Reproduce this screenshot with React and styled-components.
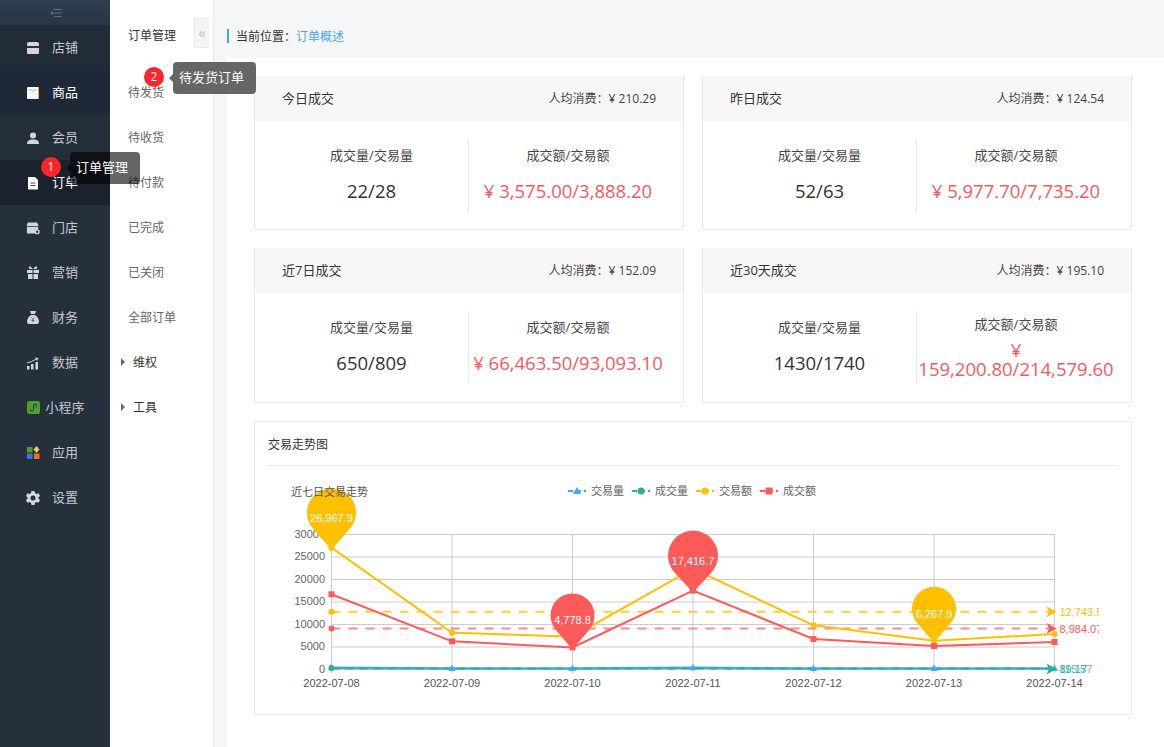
import styled, { createGlobalStyle } from 'styled-components';

const GlobalStyle = createGlobalStyle`
  html, body {
    margin: 0;
    padding: 0;
    background: #fff;
  }
  body {
    font-family: "Open Sans", "Noto Sans CJK SC", sans-serif;
    font-size: 12px;
    color: #333;
  }
  * {
    box-sizing: border-box;
  }
`;

const ICON_GREY = '#d3d6da';

const ShopIcon = () => (
  <svg width="14" height="14" viewBox="0 0 14 14">
    <path d="M1 3q0-2 2-2h8q2 0 2 2v2H1z" fill={ICON_GREY} />
    <path d="M1 7h12v5q0 1-1 1H2q-1 0-1-1z" fill={ICON_GREY} />
    <path d="M1 5h12v2H1z" fill="#3a2f35" />
  </svg>
);
const BagIcon = () => (
  <svg width="14" height="14" viewBox="0 0 14 14">
    <rect x="1" y="1" width="12" height="12" rx="1" fill="#fff" />
    <path d="M13 1v12h-1V1z" fill="#f0a63c" />
    <path d="M4 3q3 4 6 0" fill="none" stroke="#a9b3bf" strokeWidth="1" />
  </svg>
);
const UserIcon = () => (
  <svg width="14" height="14" viewBox="0 0 14 14">
    <circle cx="7" cy="4.5" r="3" fill={ICON_GREY} />
    <path d="M1 13q0-4 4-4.500h4q4 .5 4 4.500z" fill={ICON_GREY} />
  </svg>
);
const FileIcon = () => (
  <svg width="14" height="14" viewBox="0 0 14 14">
    <path d="M2 1h7l3 3v9q0 .5-.5.500h-9q-.5 0-.5-.5z" fill="#fff" />
    <path d="M4.500 7h5M4.500 9.500h5" stroke="#3f4a5a" strokeWidth="1" />
  </svg>
);
const StoreIcon = () => (
  <svg width="15" height="14" viewBox="0 0 15 14">
    <path d="M2 1h10l1.500 4h-13z" fill={ICON_GREY} />
    <path d="M1 6h12v3h-3v4H2q-1 0-1-1z" fill={ICON_GREY} />
    <circle cx="12" cy="11" r="2" fill="none" stroke={ICON_GREY} strokeWidth="1.500" />
  </svg>
);
const GiftIcon = () => (
  <svg width="14" height="15" viewBox="0 0 14 15">
    <path d="M4 1l3 3 3-3 1.500 2L10 4H4L2.500 3z" fill={ICON_GREY} />
    <path d="M1 5h5.500v3H1zM7.500 5H13v3H7.500zM2 9h4.500v5H2zM7.500 9H12v5H7.500z" fill={ICON_GREY} />
  </svg>
);
const MoneyIcon = () => (
  <svg width="14" height="15" viewBox="0 0 14 15">
    <path d="M4 1h6L9 4H5z" fill={ICON_GREY} />
    <path d="M5 5h4q4 3 4 7 0 2-2 2H3q-2 0-2-2 0-4 4-7z" fill={ICON_GREY} />
    <path d="M5.500 7.500L7 9.500l1.500-2M7 9.500V12M5.500 10.500h3" stroke="#4b5560" strokeWidth=".8" fill="none" />
  </svg>
);
const BarsIcon = () => (
  <svg width="14" height="14" viewBox="0 0 14 14">
    <path d="M1 10h2.500v3.500H1zM5 8h2.500v5.500H5zM9.500 6H12v7.500H9.500z" fill={ICON_GREY} />
    <path d="M1 7q5-1 9-4" fill="none" stroke={ICON_GREY} strokeWidth="1" />
    <path d="M9 1.500l3.500.5-1.500 3z" fill={ICON_GREY} />
  </svg>
);
const MiniIcon = () => (
  <svg width="13" height="13" viewBox="0 0 13 13">
    <rect width="13" height="13" rx="2.500" fill="#4f9e2f" />
    <path d="M3.500 8.500q0 1.500 1.500 1.500t1.500-1.500v-4Q6.500 3 8 3t1.500 1.500T8 6" fill="none" stroke="#1e3a1a" strokeWidth="1" />
  </svg>
);
const AppsIcon = () => (
  <svg width="14" height="14" viewBox="0 0 14 14">
    <rect x="1" y="1" width="5.500" height="5.500" fill="#4f9e2f" />
    <path d="M10.500 0l3 3.500-3 3.500-3-3.500z" fill="#f6c945" />
    <rect x="1" y="7.500" width="5.500" height="5.500" fill="#3f74e0" />
    <rect x="8" y="7.500" width="5.500" height="5.500" fill="#ee7414" />
  </svg>
);
const GearIcon = () => (
  <svg width="14" height="14" viewBox="0 0 14 14">
    <path d="M5.500 0h3l.4 2 1.800 1 1.900-.7 1.400 2.700-1.500 1.200v1.600l1.500 1.200-1.400 2.700-1.900-.7-1.800 1-.4 2h-3l-.4-2-1.800-1-1.900.7L0 9l1.500-1.200V6.200L0 5l1.400-2.700 1.900.7 1.800-1z" fill={ICON_GREY} />
    <circle cx="7" cy="7" r="2.500" fill="#25303d" />
  </svg>
);

const NAV_ITEMS = [
  { label: '店铺', Icon: ShopIcon, bg: '#212c39' },
  { label: '商品', Icon: BagIcon, bg: '#1e2937', active: true },
  { label: '会员', Icon: UserIcon, bg: '#232e3b' },
  { label: '订单', Icon: FileIcon, bg: '#1b212d', active: true },
  { label: '门店', Icon: StoreIcon },
  { label: '营销', Icon: GiftIcon },
  { label: '财务', Icon: MoneyIcon },
  { label: '数据', Icon: BarsIcon },
  { label: '小程序', Icon: MiniIcon },
  { label: '应用', Icon: AppsIcon },
  { label: '设置', Icon: GearIcon },
];

const SUB_ITEMS = ['待发货', '待收货', '待付款', '已完成', '已关闭', '全部订单'];

const STATS = [
  { title: '今日成交', avg: '¥ 210.29', count: '22/28', amount: '¥ 3,575.00/3,888.20' },
  { title: '昨日成交', avg: '¥ 124.54', count: '52/63', amount: '¥ 5,977.70/7,735.20' },
  { title: '近7日成交', avg: '¥ 152.09', count: '650/809', amount: '¥ 66,463.50/93,093.10' },
  { title: '近30天成交', avg: '¥ 195.10', count: '1430/1740', amount: '¥ 159,200.80/214,579.60', wrapped: true },
];

// chart is positioned in its own svg coords, origin at 268,476 of the page
const X0 = 63.5;
const STEP_X = 120.5;
const Y0 = 193;
const toY = (v) => Y0 - (v / 30000) * 135;
const toX = (i) => X0 + i * STEP_X;

const DATES = ['2022-07-08', '2022-07-09', '2022-07-10', '2022-07-11', '2022-07-12', '2022-07-13', '2022-07-14'];
const YELLOW = '#ffc000';
const RED = '#ff5a5a';
const BLUE = '#3fa9f5';
const GREEN = '#2fb08c';
const AMOUNT = [26967.9, 8067, 7178, 22300, 9700, 6267.9, 7777];
const DONE = [16600, 6150, 4778.8, 17416.7, 6670, 5100, 6000];
const VOLUME = [260, 120, 90, 300, 110, 100, 90];
const AVG_AMOUNT = 12743.5;
const AVG_DONE = 8984.07;

const pts = (vals) => vals.map((v, i) => `${toX(i)},${toY(v)}`).join(' ');

const pinPath = (cx, tip, r, cy) => {
  const d = tip - cy;
  const a = Math.acos(r / d);
  const dx = r * Math.sin(a);
  const dy = r * Math.cos(a);
  return `M${cx} ${tip}L${cx - dx} ${cy + dy}A${r} ${r} 0 1 1 ${cx + dx} ${cy + dy}Z`;
};

const PINS = [
  { i: 0, v: 26967.9, r: 24.5, label: '26,967.9', color: YELLOW, rise: 37 },
  { i: 2, v: 4778.8, r: 22, label: '4,778.8', color: RED, rise: 34 },
  { i: 3, v: 17416.7, r: 25, label: '17,416.7', color: RED, rise: 37 },
  { i: 5, v: 6267.9, r: 22, label: '6,267.9', color: YELLOW, rise: 34 },
];

const LEGEND = [
  { x: 300, label: '交易量', color: BLUE, mark: 'tri' },
  { x: 364, label: '成交量', color: GREEN, mark: 'dot' },
  { x: 428, label: '交易额', color: YELLOW, mark: 'dot' },
  { x: 492, label: '成交额', color: RED, mark: 'square' },
];

const TrendChart = () => (
  <ChartSvg width="831" height="226" viewBox="0 0 831 226">
    <g stroke="#ccc" strokeWidth="1" fill="none">
      {[0, 1, 2, 3, 4, 5, 6].map((i) => (
        <line key={i} x1={toX(i)} x2={toX(i)} y1={58.5} y2={Y0 + 4} />
      ))}
      {[0, 5000, 10000, 15000, 20000, 25000, 30000].map((v) => (
        <line key={v} x1={X0} x2={toX(6)} y1={toY(v) + 0.5} y2={toY(v) + 0.5} />
      ))}
    </g>
    {[0, 5000, 10000, 15000, 20000, 25000, 30000].map((v) => (
      <ChartText key={v} x="57" y={toY(v) + 3.5} textAnchor="end" fill="#666">{v}</ChartText>
    ))}
    {DATES.map((d, i) => (
      <ChartText key={d} x={toX(i)} y="211" textAnchor="middle" fill="#555">{d}</ChartText>
    ))}

    {LEGEND.map(({ x, label, color, mark }) => (
      <g key={label}>
        <line x1={x} x2={x + 18} y1="15" y2="15" stroke={color} strokeWidth="2" strokeDasharray="5 3" />
        {mark === 'tri' && <path d={`M${x + 9} 11l4 7h-8z`} fill={color} />}
        {mark === 'dot' && <circle cx={x + 9} cy="15" r="3.500" fill={color} />}
        {mark === 'square' && <rect x={x + 5.500} y="11.500" width="7" height="7" fill={color} />}
        <ChartText x={x + 23} y="19" fill="#666">{label}</ChartText>
      </g>
    ))}

    <line x1={X0} x2={toX(6)} y1={toY(AVG_AMOUNT)} y2={toY(AVG_AMOUNT)} stroke="#ffce3d" strokeWidth="2" strokeDasharray="9 8" />
    <line x1={X0} x2={toX(6)} y1={toY(AVG_DONE)} y2={toY(AVG_DONE)} stroke="#ff8a8a" strokeWidth="2" strokeDasharray="9 8" />
    <circle cx={X0} cy={toY(AVG_AMOUNT)} r="3" fill={YELLOW} />
    <circle cx={X0} cy={toY(AVG_DONE)} r="3" fill={RED} />
    <path d={`M${toX(6) + 2} ${toY(AVG_AMOUNT)}l-10-5.500 2.500 5.500-2.500 5.500z`} fill={YELLOW} />
    <path d={`M${toX(6) + 2} ${toY(AVG_DONE)}l-10-5.500 2.500 5.500-2.500 5.500z`} fill={RED} />
    <ChartText x={toX(6) + 5} y={toY(AVG_AMOUNT) + 4} fill={YELLOW}>12,743.5</ChartText>
    <ChartText x={toX(6) + 5} y={toY(AVG_DONE) + 4} fill={RED}>8,984.07</ChartText>

    <polyline points={pts(AMOUNT)} fill="none" stroke={YELLOW} strokeWidth="2" />
    <polyline points={pts(DONE)} fill="none" stroke={RED} strokeWidth="2" />
    {AMOUNT.map((v, i) => <circle key={i} cx={toX(i)} cy={toY(v)} r="3" fill={YELLOW} />)}
    {DONE.map((v, i) => <rect key={i} x={toX(i) - 3} y={toY(v) - 3} width="6" height="6" fill={RED} />)}

    <polyline points={pts(VOLUME)} fill="none" stroke={BLUE} strokeWidth="2.500" />
    <line x1={X0} x2={toX(6)} y1={Y0 - 0.5} y2={Y0 - 0.5} stroke={GREEN} strokeWidth="2" strokeDasharray="8 6" />
    {VOLUME.map((v, i) => <path key={i} d={`M${toX(i)} ${toY(v) - 4}l3.500 6.500h-7z`} fill={BLUE} />)}
    <circle cx={X0} cy={Y0 - 1} r="3" fill={GREEN} />
    <path d={`M${toX(6) + 2} ${Y0}l-10-5.500 2.500 5.500-2.500 5.500z`} fill={GREEN} />
    <ChartText x={toX(6) + 5} y={Y0 + 4} fill="#5bb9f0">115.57</ChartText>
    <ChartText x={toX(6) + 5} y={Y0 + 4} fill={GREEN}>89.17</ChartText>

    {PINS.map(({ i, v, r, label, color, rise }) => {
      const cx = toX(i);
      const tip = toY(v) + 2;
      const cy = tip - rise;
      return (
        <g key={label}>
          <path d={pinPath(cx, tip, r, cy)} fill={color} />
          <ChartText x={cx} y={cy + 9} textAnchor="middle" fill="#fff">{label}</ChartText>
        </g>
      );
    })}
    <ChartText x="23" y="20" fill="#555">近七日交易走势</ChartText>
  </ChartSvg>
);

const App = () => {
  return (
    <>
      <GlobalStyle />
      <Page>
        <Sidebar>
          <SidebarToggle>
            <svg width="12" height="8" viewBox="0 0 12 8">
              <path d="M4 .5h8M4 4h8M4 7.500h8" stroke="#5f6e7e" strokeWidth="1" />
              <path d="M0 4l3-2v4z" fill="#5f6e7e" />
            </svg>
          </SidebarToggle>
          {NAV_ITEMS.map(({ label, Icon, bg, active }) => (
            <NavItem key={label} $bg={bg} $active={active}>
              <NavIcon><Icon /></NavIcon>
              <NavLabel>{label}</NavLabel>
            </NavItem>
          ))}
        </Sidebar>

        <SubNav>
          <SubTitle>订单管理</SubTitle>
          {SUB_ITEMS.map((item) => <SubItem key={item}>{item}</SubItem>)}
          <SubGroup>维权</SubGroup>
          <SubGroup>工具</SubGroup>
          <CollapseTab>«</CollapseTab>
        </SubNav>

        <Main>
          <Breadcrumb>
            <Crumb>当前位置：<CrumbLink>订单概述</CrumbLink></Crumb>
          </Breadcrumb>
          <Content>
            <StatGrid>
              {STATS.map((s) => (
                <StatCard key={s.title}>
                  <StatHeader>
                    <StatTitle>{s.title}</StatTitle>
                    <StatAvg>人均消费：{s.avg}</StatAvg>
                  </StatHeader>
                  <StatBody>
                    <StatCol>
                      <StatLabel>成交量/交易量</StatLabel>
                      <StatValue>{s.count}</StatValue>
                    </StatCol>
                    <StatCol $divided $wrapped={s.wrapped}>
                      <StatLabel>成交额/交易额</StatLabel>
                      <StatValue $red $wrapped={s.wrapped}>{s.amount}</StatValue>
                    </StatCol>
                  </StatBody>
                </StatCard>
              ))}
            </StatGrid>
            <ChartCard>
              <ChartTitle>交易走势图</ChartTitle>
              <TrendChart />
            </ChartCard>
          </Content>
        </Main>

        <Tip $x={70} $y={152} $w={70} $h={32} $bg="rgba(0,0,0,.6)">订单管理</Tip>
        <Badge $x={41} $y={157}>1</Badge>
        <Tip $x={173} $y={62} $w={83} $h={32} $bg="#666">待发货订单</Tip>
        <Badge $x={144} $y={67}>2</Badge>
      </Page>
    </>
  );
};

const Page = styled.div`
  position: relative;
  display: flex;
  width: 1164px;
  height: 747px;
  overflow: hidden;
`;

const Sidebar = styled.aside`
  width: 110px;
  flex-shrink: 0;
  background: #25303d;
`;

const SidebarToggle = styled.div`
  height: 25px;
  display: flex;
  align-items: center;
  justify-content: center;
  padding-left: 2px;
  background: linear-gradient(#2e3f50, #283645);
`;

const NavItem = styled.div`
  height: 45px;
  display: flex;
  align-items: center;
  padding-left: 26px;
  background: ${(p) => p.$bg || 'transparent'};
  color: ${(p) => (p.$active ? '#fff' : '#c4c9ce')};
`;

const NavIcon = styled.span`
  width: 14px;
  display: flex;
  justify-content: center;
`;

const NavLabel = styled.span`
  width: 50px;
  padding-bottom: 2px;
  text-align: center;
  font-size: 13px;
`;

const SubNav = styled.nav`
  position: relative;
  width: 104px;
  flex-shrink: 0;
  background: #fff;
  border-right: 1px solid #e9ebee;
  padding-top: 13px;
`;

const SubTitle = styled.div`
  height: 57px;
  line-height: 45px;
  padding-left: 18px;
  color: #333;
`;

const SubItem = styled.div`
  height: 45px;
  line-height: 45px;
  padding-left: 18px;
  color: #666;
`;

const SubGroup = styled.div`
  position: relative;
  height: 45px;
  line-height: 45px;
  padding-left: 23px;
  color: #333;
  &::before {
    content: '';
    position: absolute;
    left: 11px;
    top: 18px;
    border-style: solid;
    border-width: 4px 0 4px 4px;
    border-color: transparent transparent transparent #5f6b7a;
  }
`;

const CollapseTab = styled.div`
  position: absolute;
  left: 84px;
  top: 18px;
  width: 15px;
  height: 30px;
  background: #f3f5f7;
  border: 1px solid #e9ecef;
  border-right: 0;
  color: #b3c3d2;
  font-size: 15px;
  line-height: 27px;
  text-align: center;
`;

const Main = styled.main`
  flex: 1;
  min-width: 0;
  background: #f5f6f8;
  padding-left: 13px;
`;

const Breadcrumb = styled.div`
  height: 58px;
  padding-top: 29px;
`;

const Crumb = styled.div`
  height: 14px;
  line-height: 15px;
  border-left: 2px solid #3fa9f5;
  padding-left: 7px;
  color: #333;
`;

const CrumbLink = styled.span`
  color: #4aa6ee;
`;

const Content = styled.div`
  height: 689px;
  background: #fff;
  padding: 18px 32px 0 27px;
`;

const StatGrid = styled.div`
  display: grid;
  grid-template-columns: 430px 430px;
  gap: 18px;
`;

const StatCard = styled.section`
  border: 1px solid #eaeaea;
  border-top: 0;
`;

const StatHeader = styled.header`
  height: 45px;
  padding: 0 27px 2px;
  display: flex;
  align-items: center;
  justify-content: space-between;
  background: #f7f7f7;
`;

const StatTitle = styled.span`
  font-size: 13px;
  color: #333;
`;

const StatAvg = styled.span`
  color: #444;
`;

const StatBody = styled.div`
  display: grid;
  grid-template-columns: 193px 199px;
  padding: 18px 0 18px 20px;
`;

const StatCol = styled.div`
  min-height: 72px;
  display: flex;
  flex-direction: column;
  justify-content: flex-start;
  text-align: center;
  padding-top: ${(p) => (p.$wrapped ? '3px' : '6px')};
  padding-bottom: ${(p) => (p.$wrapped ? '6px' : '0')};
  border-left: ${(p) => (p.$divided ? '1px solid #eaeaea' : '0')};
`;

const StatLabel = styled.div`
  font-size: 13px;
  line-height: 20px;
  color: #444;
`;

const StatValue = styled.div`
  margin-top: ${(p) => (p.$wrapped ? '6px' : '16px')};
  font-size: 18.500px;
  line-height: ${(p) => (p.$wrapped ? '19px' : '20px')};
  color: ${(p) => (p.$red ? '#f55a5f' : '#333')};
`;

const ChartCard = styled.section`
  margin-top: 18px;
  height: 294px;
  border: 1px solid #eaeaea;
  padding: 0 13px;
`;

const ChartTitle = styled.div`
  height: 44px;
  line-height: 46px;
  color: #333;
  border-bottom: 1px solid #eaeaea;
`;

const ChartSvg = styled.svg`
  display: block;
  margin-top: 10px;
`;

const ChartText = styled.text`
  font-family: "Liberation Sans", "Noto Sans CJK SC", sans-serif;
  font-size: 11px;
`;

const Tip = styled.div`
  position: absolute;
  left: ${(p) => p.$x}px;
  top: ${(p) => p.$y}px;
  width: ${(p) => p.$w}px;
  height: ${(p) => p.$h}px;
  line-height: ${(p) => p.$h - 2}px;
  padding-left: 6px;
  font-size: 13px;
  white-space: nowrap;
  color: #fff;
  background: ${(p) => p.$bg};
  border-radius: 4px;
  &::before {
    content: '';
    position: absolute;
    left: -4px;
    top: 12px;
    border-style: solid;
    border-width: 4px 4px 4px 0;
    border-color: transparent ${(p) => p.$bg} transparent transparent;
  }
`;

const Badge = styled.span`
  position: absolute;
  left: ${(p) => p.$x}px;
  top: ${(p) => p.$y}px;
  width: 20px;
  height: 20px;
  border-radius: 50%;
  background: #f9262b;
  color: #fff;
  font-size: 12px;
  line-height: 20px;
  text-align: center;
`;

export default App;
